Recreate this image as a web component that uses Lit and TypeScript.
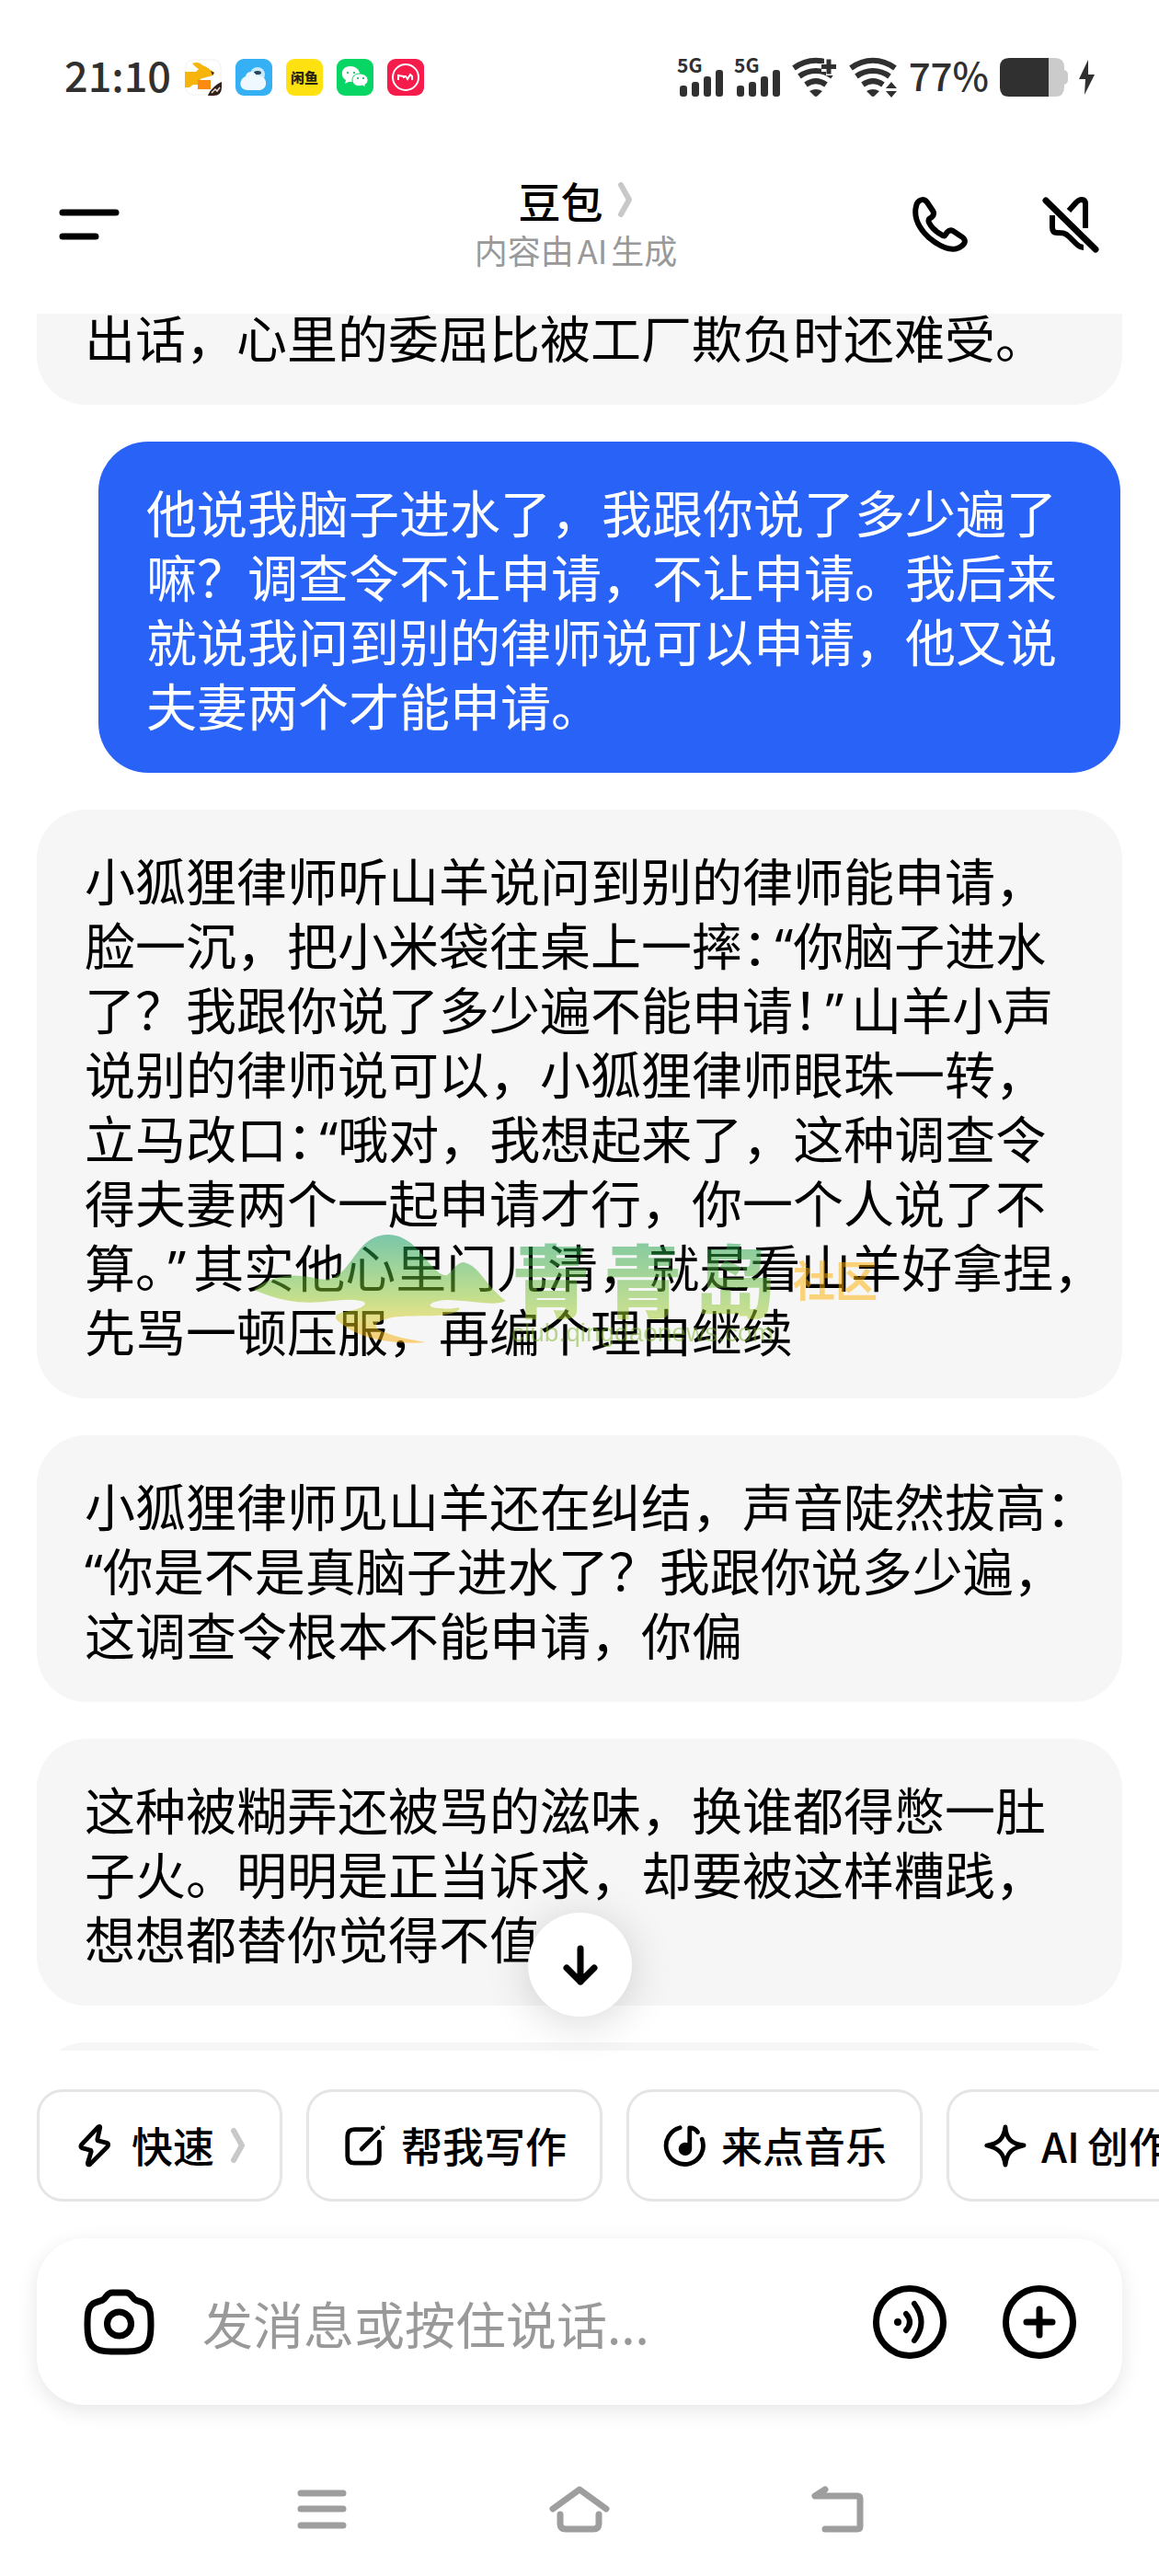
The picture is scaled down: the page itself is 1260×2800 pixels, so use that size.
import { LitElement, html, css, svg, TemplateResult } from "lit";
import { customElement, property } from "lit/decorators.js";
import { classMap } from "lit/directives/class-map.js";

type Token = string | { stop?: string; end?: string; open?: string; close?: string };

interface Message {
  id: number;
  mine?: boolean;
  clipped?: boolean;
  watermark?: boolean;
  text: Token[];
}

const MESSAGES: Message[] = [
  { id: 1, clipped: true, text: ["出话，心里的委屈比被工厂欺负时还难受。"] },
  {
    id: 2,
    mine: true,
    text: [
      "他说我脑子进水了，我跟你说了多少遍了嘛？调查令不让申请，不让申请。我后来就说我问到别的律师说可以申请，他又说夫妻两个才能申请。",
    ],
  },
  {
    id: 3,
    watermark: true,
    text: [
      "小狐狸律师听山羊说问到别的律师能申请，脸一沉，把小米袋往桌上一摔",
      { stop: "：" },
      { open: "“" },
      "你脑子进水了？我跟你说了多少遍不能申请",
      { stop: "！" },
      { close: "”" },
      "山羊小声说别的律师说可以，小狐狸律师眼珠一转，立马改口",
      { stop: "：" },
      { open: "“" },
      "哦对，我想起来了，这种调查令得夫妻两个一起申请才行，你一个人说了不算",
      { stop: "。" },
      { close: "”" },
      "其实他心里门儿清，就是看山羊好拿捏",
      { end: "，" },
      "先骂一顿压服，再编个理由继续",
    ],
  },
  {
    id: 4,
    text: [
      "小狐狸律师见山羊还在纠结，声音陡然拔高",
      { end: "：" },
      { open: "“" },
      "你是不是真脑子进水了？我跟你说多少遍，这调查令根本不能申请，你偏",
    ],
  },
  {
    id: 5,
    text: [
      "这种被糊弄还被骂的滋味，换谁都得憋一肚子火。明明是正当诉求，却要被这样糟践，想想都替你觉得不值",
    ],
  },
  { id: 6, text: [] },
];

const chevron = html`<svg class="chevron" width="19" height="42" viewBox="0 0 19 42" fill="none" stroke="#c8c8c8" stroke-width="6" stroke-linecap="round" stroke-linejoin="round" aria-hidden="true"><path d="M5 5L14 21L5 37" /></svg>`;

@customElement("status-bar")
export class StatusBar extends LitElement {
  static styles = css`
    :host {
      display: flex;
      align-items: center;
      justify-content: space-between;
      height: 160px;
      padding: 8px 70px 0 70px;
      box-sizing: border-box;
      color: #303030;
      font-weight: 500;
    }
    .side {
      display: flex;
      align-items: center;
    }
    .apps {
      gap: 15px;
    }
    .system {
      gap: 12px;
    }
    .clock,
    .percent {
      padding-bottom: 6px;
      line-height: 56px;
    }
    .clock {
      font-size: 45px;
    }
    .percent {
      font-size: 42px;
    }
    svg {
      display: block;
      flex: none;
      overflow: visible;
    }
  `;

  private signal() {
    return html`<svg width="50" height="44" viewBox="0 0 50 44" fill="#303030" role="img" aria-label="5G">
      <text x="0" y="17" font-size="21" font-weight="700">5G</text>
      <rect x="3" y="31" width="8" height="12" rx="3" />
      <rect x="16" y="27" width="8" height="16" rx="3" />
      <rect x="29" y="21" width="8" height="22" rx="3" />
      <rect x="42" y="14" width="8" height="29" rx="3" />
    </svg>`;
  }

  private waves() {
    return svg`<g fill="none" stroke="#303030" stroke-width="6">
        <path d="M3 12C18 1 36 1 51 12" />
        <path d="M9 21C20 13 34 13 45 21" />
        <path d="M16 30C23 25 31 25 38 30" />
      </g>
      <path d="M20 37Q27 33 34 37L29 42Q27 44 25 42Z" fill="#303030" />`;
  }

  render() {
    return html`
      <div class="side apps">
        <span class="clock">21:10</span>
        <svg width="40" height="40" viewBox="0 0 40 40" aria-hidden="true">
          <rect x="1" y="1" width="38" height="38" rx="8" fill="#fff" stroke="#f1f1f1" />
          <path d="M0 14H12L15 11L12 9L8 5C12 3 17 4 19 7C23 8 28 12 32 15L30 18C25 20 21 20 17 22L14 28H9L5 31H0Z" fill="#f7b50c" />
          <rect x="14" y="23" width="14" height="10" fill="#fb8a10" />
          <path d="M28 13l4 2-2 3z" fill="#4a3010" />
          <path d="M25 40C27 34 33 28 40 25V31Q40 40 31 40Z" fill="#35211b" />
          <path d="M29 37l4-4 2 2 3-4" stroke="#e9ddd0" stroke-width="1.5" fill="none" />
        </svg>
        <svg width="40" height="40" viewBox="0 0 40 40" aria-hidden="true">
          <rect width="40" height="40" rx="9" fill="#36b0f4" />
          <circle cx="24" cy="17" r="8" fill="#c9e9fb" />
          <ellipse cx="24" cy="15" rx="4" ry="2" fill="#28445c" />
          <path d="M14 34C7 34 4 29 6 24C7 21 9 20 11 19C12 13 21 12 23 19C29 17 34 22 33 28C32 32 29 34 25 34Z" fill="#eef8fe" />
        </svg>
        <svg width="40" height="40" viewBox="0 0 40 40" aria-hidden="true">
          <rect width="40" height="40" rx="9" fill="#fde111" />
          <text x="20" y="26" text-anchor="middle" font-size="15" font-weight="900" fill="#2b2610">闲鱼</text>
        </svg>
        <svg width="40" height="40" viewBox="0 0 40 40" aria-hidden="true">
          <rect width="40" height="40" rx="9" fill="#07d664" />
          <path d="M15 8C8 8 5 13 6 17C6 20 8 22 10 23L9 27L13 25H17C24 24 26 19 25 15C24 11 20 8 15 8Z" fill="#fff" />
          <path d="M25 16C20 16 17 19 17 23C17 28 22 31 28 29L31 31V28C34 26 34 24 34 22C33 18 29 16 25 16Z" fill="#fff" stroke="#07d664" />
          <g fill="#07a850"><circle cx="12" cy="15" r="1" /><circle cx="19" cy="15" r="1" /><circle cx="23" cy="21" r="1" /><circle cx="29" cy="21" r="1" /></g>
        </svg>
        <svg width="40" height="40" viewBox="0 0 40 40" aria-hidden="true">
          <rect width="40" height="40" rx="9" fill="#f51b4b" />
          <circle cx="20" cy="20" r="14" fill="none" stroke="#fff" stroke-width="2" />
          <path d="M12 23V18L18 19V21M18 19H20L22 22L25 17L27 19V23" fill="none" stroke="#fff" stroke-width="2" />
        </svg>
      </div>
      <div class="side system">
        ${this.signal()} ${this.signal()}
        <svg width="50" height="44" viewBox="0 0 50 44" role="img" aria-label="Wi-Fi">
          ${this.waves()}
          <path d="M36 0H54V20H38V16H33V7H36Z" fill="#fff" />
          <path d="M33 10.5H49M41 2.5V18.5" stroke="#303030" stroke-width="5" fill="none" />
        </svg>
        <svg width="54" height="44" viewBox="0 0 54 44" role="img" aria-label="Wi-Fi">
          ${this.waves()}
          <path d="M39 34L47 24L55 34V44H39Z" fill="#fff" />
          <path d="M41 34L47 27L53 34ZM41 37L47 44L53 37Z" fill="#303030" />
        </svg>
        <span class="percent">77%</span>
        <svg width="74" height="42" viewBox="0 0 74 42" role="img" aria-label="77%">
          <path d="M53 0H60Q70 0 70 10V13Q74 14 74 18V24Q74 28 70 29V32Q70 42 60 42H53Z" fill="#cbcbcb" />
          <path d="M10 0H53V42H10Q0 42 0 32V10Q0 0 10 0Z" fill="#303030" />
        </svg>
        <svg width="17" height="38" viewBox="0 0 17 38" fill="#303030" aria-hidden="true"><path d="M10 0L0 21H7L6 38L17 16H10Z" /></svg>
      </div>
    `;
  }
}

@customElement("chat-header")
export class ChatHeader extends LitElement {
  static styles = css`
    :host {
      display: grid;
      grid-template-columns: 1fr auto 1fr;
      align-items: center;
      height: 168px;
      margin-bottom: 13px;
      padding: 0 64px;
      box-sizing: border-box;
    }
    button {
      display: block;
      padding: 0;
      border: 0;
      background: none;
      color: inherit;
      font: inherit;
    }
    svg {
      display: block;
    }
    .actions {
      display: flex;
      justify-content: flex-end;
      gap: 80px;
    }
    .center {
      display: flex;
      flex-direction: column;
      align-items: center;
      padding-right: 8px;
    }
    .title {
      display: flex;
      align-items: center;
      gap: 14px;
      font-size: 46px;
      line-height: 54px;
      font-weight: 500;
    }
    .title h1 {
      margin: 0;
      font: inherit;
    }
    .note {
      margin: 0;
      font-size: 36px;
      line-height: 54px;
      color: #999;
      text-autospace: no-autospace;
    }
    .latin {
      margin: 0 4px;
    }
  `;

  render() {
    return html`
      <button aria-label="菜单">
        <svg width="66" height="36" viewBox="0 0 66 36" stroke="#000" stroke-width="7" stroke-linecap="round"><path d="M4 5H62M4 31H40" /></svg>
      </button>
      <div class="center">
        <button class="title"><h1>豆包</h1>${chevron}</button>
        <p class="note">内容由<span class="latin">AI</span>生成</p>
      </div>
      <div class="actions">
        <button aria-label="语音通话">
          <svg width="60" height="60" viewBox="0 0 60 60" fill="none" stroke="#000" stroke-width="6" stroke-linejoin="round">
            <path d="M5 7C8 2 13 2 16 6L22 15C24 18 23 20 21 22L18 24Q17 26 18 28C21 34 27 39 33 42Q35 43 36 41L38 38C40 36 42 36 44 37L53 43C58 46 58 50 54 53C46 60 34 56 24 49C12 41 0 26 4 10Z" />
          </svg>
        </button>
        <button aria-label="静音">
          <svg width="64" height="64" viewBox="0 0 64 64" fill="none" stroke="#000" stroke-width="7" stroke-linejoin="round">
            <path d="M5 6L59 59" stroke-linecap="round" />
            <path d="M30 17L38 8Q41 5 44 5Q48 5 48 10V36" stroke-width="6" />
            <path d="M12 22V35Q12 41 17 41C24 41 26 41 31 46L38 53Q42 57 46 57" stroke-width="6" />
          </svg>
        </button>
      </div>
    `;
  }
}

@customElement("area-watermark")
export class AreaWatermark extends LitElement {
  static styles = css`
    :host {
      display: flex;
      align-items: flex-start;
      gap: 6px;
      pointer-events: none;
      opacity: 0.5;
      white-space: nowrap;
    }
    .hill {
      display: block;
      flex: none;
    }
    .words {
      display: flex;
      flex-direction: column;
    }
    .names {
      display: flex;
      align-items: center;
      gap: 20px;
    }
    .name {
      display: flex;
      gap: 14px;
      font-size: 86px;
      line-height: 94px;
      font-weight: 900;
      color: transparent;
      background: linear-gradient(#0c9c50, #a8d028);
      background-clip: text;
      -webkit-background-clip: text;
    }
    .kind {
      font-size: 46px;
      line-height: 90px;
      font-weight: 700;
      color: #ffb000;
    }
    .address {
      font-size: 28px;
      line-height: 26px;
      color: #78b428;
      font-family: "Liberation Sans", sans-serif;
    }
  `;

  render() {
    return html`
      <svg class="hill" width="274" height="118" viewBox="0 0 274 118" aria-hidden="true">
        <defs>
          <linearGradient id="hill-fill" x1="0" y1="0" x2="0" y2="1">
            <stop offset="0" stop-color="#009860" />
            <stop offset=".55" stop-color="#88c828" />
            <stop offset=".75" stop-color="#d0cc20" />
            <stop offset="1" stop-color="#ffa800" />
          </linearGradient>
        </defs>
        <path fill="url(#hill-fill)" d="M0 60C24 40 48 44 66 47C90 54 98 38 112 20C130 -6 158 -6 178 16C192 32 202 46 210 44C216 40 220 30 228 30C246 34 250 54 274 72C262 78 242 72 210 71C190 72 184 80 204 80C214 82 222 78 224 80C218 92 180 86 150 90C132 94 126 100 142 106C156 112 170 114 187 117C152 120 120 112 106 104C86 92 84 88 98 84C116 82 128 74 116 72C86 66 60 86 0 60Z" />
      </svg>
      <div class="words">
        <div class="names">
          <span class="name"><span>青</span><span>青</span><span>岛</span></span>
          <span class="kind">社区</span>
        </div>
        <span class="address">club.qingdaonews.com</span>
      </div>
    `;
  }
}

@customElement("chat-bubble")
export class ChatBubble extends LitElement {
  @property({ attribute: false }) message!: Message;

  static styles = css`
    :host {
      display: flex;
      flex: none;
    }
    .bubble {
      position: relative;
      flex: 1;
      margin: 0;
      padding: 40px 34px 40px 52px;
      border-radius: 54px;
      background: #f6f6f6;
      color: #000;
      font-size: 55px;
      line-height: 70px;
      text-autospace: no-autospace;
    }
    .bubble.mine {
      margin: 0 2px 0 67px;
      background: #2962f6;
      color: #fff;
    }
    .bubble.clipped {
      padding-top: 0;
      border-top-left-radius: 0;
      border-top-right-radius: 0;
    }
    p {
      margin: 0;
      min-height: 70px;
    }
    .half {
      font-feature-settings: "halt";
    }
    .half.spaced {
      margin-right: 8px;
    }
    .quote {
      font-family: "Noto Sans", sans-serif;
      line-height: 0;
    }
    .quote.close {
      margin-right: 8px;
    }
    area-watermark {
      position: absolute;
      left: 236px;
      top: 462px;
    }
  `;

  private token(t: Token) {
    if (typeof t === "string") return t;
    if (t.stop) return html`<span class="half spaced">${t.stop}</span>`;
    if (t.end) return html`<span class="half">${t.end}</span>`;
    if (t.open) return html`<span class="quote">${t.open}</span>`;
    return html`<span class="quote close">${t.close}</span>`;
  }

  render() {
    const { mine, clipped, watermark, text } = this.message;
    return html`<div class=${classMap({ bubble: true, mine: !!mine, clipped: !!clipped })}>
      <p>${text.map((t) => this.token(t))}</p>
      ${watermark ? html`<area-watermark></area-watermark>` : ""}
    </div>`;
  }
}

const CHIPS: { label: TemplateResult; more?: boolean; icon: TemplateResult }[] = [
  {
    label: html`快速`,
    more: true,
    icon: svg`<path d="M31 4L28 17Q28 19 30 19L38 21Q42 22 39 26L20 45Q17 47 17 44L21 31Q21 29 19 29L11 27Q8 26 10 23L28 4Q31 1 31 4Z" />` as TemplateResult,
  },
  {
    label: html`帮我写作`,
    icon: svg`<path d="M33 6H14Q6 6 6 14V36Q6 44 14 44H34Q42 44 42 36V20M22 28L41 9" /><circle cx="46" cy="4" r="1" stroke-width="3" />` as TemplateResult,
  },
  {
    label: html`来点音乐`,
    icon: svg`<path d="M20 4A21 21 0 1 0 45 17M31 28V4Q37 4 40 9" /><circle cx="26" cy="28" r="5" fill="#000" />` as TemplateResult,
  },
  {
    label: html`<span class="latin">AI</span>创作`,
    icon: svg`<path d="M26 3C27 17 33 22 47 24C33 27 28 32 26 46C24 32 18 27 5 24C18 22 24 17 26 3Z" />` as TemplateResult,
  },
];

@customElement("chat-composer")
export class ChatComposer extends LitElement {
  static styles = css`
    :host {
      display: flex;
      flex-direction: column;
      gap: 40px;
      padding: 42px 0 0 40px;
    }
    button {
      flex: none;
      display: flex;
      align-items: center;
      padding: 0;
      border: 0;
      background: none;
      color: #000;
      font: inherit;
    }
    svg {
      display: block;
      flex: none;
    }
    .chips {
      display: flex;
      gap: 26px;
      overflow: hidden;
    }
    .chip {
      gap: 16px;
      height: 122px;
      padding: 0 36px;
      border: 3px solid #e5e5e5;
      border-radius: 28px;
      font-size: 45px;
      line-height: 56px;
      font-weight: 500;
      white-space: nowrap;
      text-autospace: no-autospace;
    }
    .latin {
      margin-right: 8px;
    }
    .card {
      display: flex;
      align-items: center;
      height: 181px;
      margin-right: 40px;
      padding: 0 50px;
      box-sizing: border-box;
      border-radius: 52px;
      background: #fff;
      box-shadow: 0 6px 22px rgba(0, 0, 0, 0.1);
    }
    input {
      flex: 1;
      min-width: 0;
      margin: 0 50px;
      padding: 0;
      border: 0;
      outline: 0;
      background: none;
      color: #000;
      font: inherit;
      font-size: 55px;
      line-height: 70px;
    }
    input::placeholder {
      color: #999;
      opacity: 1;
    }
    .tools {
      display: flex;
      gap: 61px;
    }
  `;

  render() {
    return html`
      <div class="chips">
        ${CHIPS.map(
          (c) => html`<button class="chip">
            <svg width="48" height="48" viewBox="0 0 50 48" fill="none" stroke="#000" stroke-width="5" stroke-linecap="round" stroke-linejoin="round" aria-hidden="true">${c.icon}</svg>
            <span>${c.label}</span>${c.more ? chevron : ""}
          </button>`,
        )}
      </div>
      <div class="card">
        <button aria-label="拍照">
          <svg width="80" height="74" viewBox="0 0 80 74" fill="none" stroke="#000" stroke-width="7" stroke-linejoin="round">
            <path d="M32 5H47C52 5 53 9 56 12C59 15 65 14 69 18C74 22 74 31 74 41C74 62 69 69 48 69H31C10 69 5 62 5 41C5 31 5 22 10 18C14 14 20 15 23 12C26 9 27 5 32 5Z" />
            <circle cx="39.5" cy="39" r="13" />
          </svg>
        </button>
        <input type="text" aria-label="发消息" placeholder="发消息或按住说话..." />
        <div class="tools">
          <button aria-label="语音">
            <svg width="80" height="80" viewBox="0 0 80 80" fill="none" stroke="#000" stroke-width="6" stroke-linecap="round">
              <circle cx="40" cy="40" r="36.5" stroke-width="7" />
              <circle cx="27" cy="40" r="4" fill="#000" stroke="none" />
              <path d="M36 31Q44 40 36 49M45 20Q60 40 45 60" />
            </svg>
          </button>
          <button aria-label="更多">
            <svg width="80" height="80" viewBox="0 0 80 80" fill="none" stroke="#000" stroke-width="7" stroke-linecap="round">
              <circle cx="40" cy="40" r="36.5" />
              <path d="M26 40H54M40 26V54" />
            </svg>
          </button>
        </div>
      </div>
    `;
  }
}

@customElement("system-nav")
export class SystemNav extends LitElement {
  static styles = css`
    :host {
      display: grid;
      grid-template-columns: 3fr 4fr 4fr 4fr 3fr;
      align-items: center;
      justify-items: center;
      height: 186px;
      padding-top: 40px;
      box-sizing: border-box;
    }
    button {
      padding: 0;
      border: 0;
      background: none;
    }
    button:first-child {
      grid-column: 2;
    }
    svg {
      display: block;
      fill: none;
      stroke: #9e9e9e;
      stroke-width: 7;
      stroke-linejoin: round;
    }
  `;

  render() {
    return html`
      <button aria-label="最近任务"><svg width="54" height="44" viewBox="0 0 54 44" stroke-linecap="round"><path d="M4 5H50M4 22H50M4 40H50" /></svg></button>
      <button aria-label="主屏幕"><svg width="66" height="52" viewBox="0 0 66 52" stroke-linecap="round"><path d="M4 26L33 5L62 26M12 32V42Q12 48 18 48H48Q54 48 54 42V32" /></svg></button>
      <button aria-label="返回"><svg width="60" height="54" viewBox="0 0 60 54" stroke-linecap="round"><path d="M17 6L6 13H52Q55 13 55 16V46Q55 49 52 49H17" /></svg></button>
    `;
  }
}

@customElement("app-root")
export class AppRoot extends LitElement {
  static styles = css`
    :host {
      display: flex;
      flex-direction: column;
      height: 100vh;
      overflow: hidden;
      background: #fff;
      color: #000;
      font-family: "Noto Sans CJK SC", "Noto Sans", sans-serif;
    }
    status-bar,
    chat-header,
    chat-composer,
    system-nav {
      flex: none;
    }
    .stage {
      position: relative;
      display: flex;
      flex: 1;
      min-height: 0;
    }
    .thread {
      display: flex;
      flex: 1;
      flex-direction: column;
      gap: 40px;
      padding: 0 40px;
      overflow-y: auto;
      scrollbar-width: none;
    }
    .thread chat-bubble:first-child {
      margin-top: -11px;
    }
    .latest {
      position: absolute;
      left: 50%;
      bottom: 37px;
      display: flex;
      align-items: center;
      justify-content: center;
      width: 113px;
      height: 113px;
      margin-left: -56px;
      padding: 0;
      border: 0;
      border-radius: 50%;
      background: #fff;
      box-shadow: 0 6px 48px rgba(0, 0, 0, 0.16);
    }
  `;

  render() {
    return html`
      <status-bar></status-bar>
      <chat-header></chat-header>
      <main class="stage">
        <div class="thread" lang="zh-CN">
          ${MESSAGES.map((m) => html`<chat-bubble .message=${m}></chat-bubble>`)}
        </div>
        <button class="latest" aria-label="回到底部">
          <svg width="40" height="46" viewBox="0 0 40 46" fill="none" stroke="#000" stroke-width="7" stroke-linecap="round" stroke-linejoin="round"><path d="M20 5V41M5 26L20 41L35 26" /></svg>
        </button>
      </main>
      <chat-composer></chat-composer>
      <system-nav></system-nav>
    `;
  }
}
